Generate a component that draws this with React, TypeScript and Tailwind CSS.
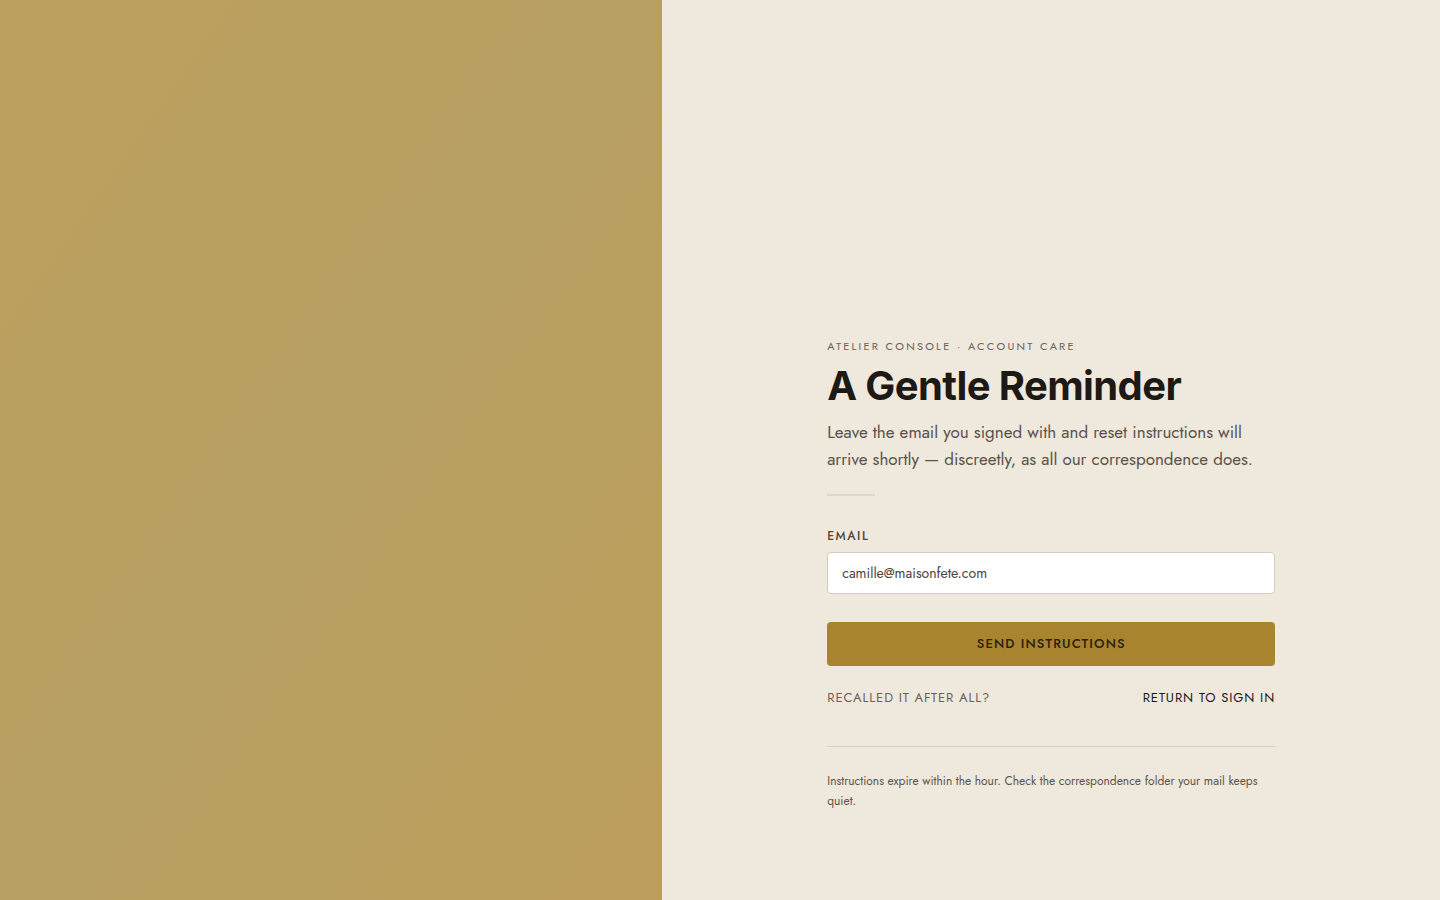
import { useState } from "react";

const body = { fontFamily: '"Jost", "Lato", "Noto Sans", sans-serif' };

export default function App() {
  const [email, setEmail] = useState("camille@maisonfete.com");

  return (
    <div className="flex h-screen w-full bg-[#efe8dd]" style={body}>
      {/* Gold panel */}
      <div className="w-[46%] shrink-0 h-full bg-[linear-gradient(125deg,#bca05f_0%,#b79f61_50%,#bb9e5d_100%)]" />

      {/* Form side */}
      <div className="flex-1 flex justify-center pt-[338px]">
        <div className="w-[448px]">
          <div className="text-[11px] tracking-[0.2em] text-[#6b6157] uppercase leading-4">
            Atelier Console · Account Care
          </div>
          <h1 className="mt-[8px] text-[40px] leading-[48px] font-bold tracking-[-0.015em] text-[#1d1a16] font-['Inter',sans-serif]">
            A Gentle Reminder
          </h1>
          <p className="mt-[9px] text-[17px] leading-[27px] text-[#5a5249]">
            Leave the email you signed with and reset instructions will arrive shortly — discreetly, as
            all our correspondence does.
          </p>
          <div className="mt-[21px] h-[2px] w-12 bg-[#e2d7c2]" />

          <label className="block mt-[32px] text-[12px] font-medium tracking-[0.13em] text-[#4d453c] uppercase leading-4">
            Email
          </label>
          <input
            value={email}
            onChange={(e) => setEmail(e.target.value)}
            className="mt-[8px] block w-full h-[42px] rounded-[4px] border border-[#d4ccc0] bg-white px-[14px] text-[14px] text-[#4a443d] outline-none"
            style={body}
          />

          <button
            className="mt-[28px] w-full h-[44px] rounded-[4px] bg-[#a8842e] text-[13px] font-medium tracking-[0.09em] text-[#2a2110] uppercase"
            style={body}
          >
            Send Instructions
          </button>

          <div className="mt-[22px] flex items-center justify-between text-[13px] tracking-[0.07em] uppercase leading-5">
            <span className="text-[#6b6157]">Recalled it after all?</span>
            <a href="#" className="text-[#1d1a16]">
              Return to sign in
            </a>
          </div>

          <div className="mt-[38px] h-px bg-[#d8d0c4]" />

          <p className="mt-[24px] text-[12px] leading-5 text-[#5c544b]">
            Instructions expire within the hour. Check the correspondence folder your mail keeps quiet.
          </p>
        </div>
      </div>
    </div>
  );
}
